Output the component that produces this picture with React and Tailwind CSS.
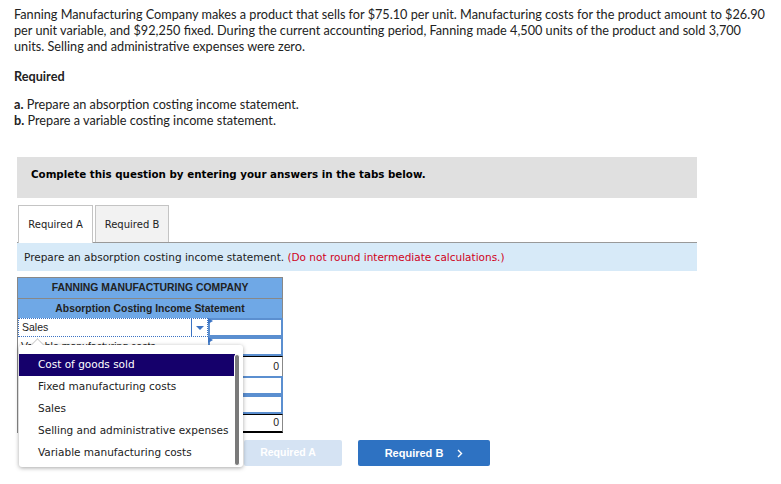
export default function App() {
  const options = [
    "Cost of goods sold",
    "Fixed manufacturing costs",
    "Sales",
    "Selling and administrative expenses",
    "Variable manufacturing costs",
  ];

  return (
    <div className="w-[781px] h-[484px] bg-white overflow-hidden relative">
      {/* problem text */}
      <div className="px-[14px] pt-[6px] text-[12.7px] leading-[16px] text-[#222] font-['Lato','Open_Sans',sans-serif] whitespace-nowrap">
        <p>
          Fanning Manufacturing Company makes a product that sells for $75.10 per unit. Manufacturing costs for the product amount to $26.90
          <br />
          per unit variable, and $92,250 fixed. During the current accounting period, Fanning made 4,500 units of the product and sold 3,700
          <br />
          units. Selling and administrative expenses were zero.
        </p>
        <p className="mt-[14px] font-bold">Required</p>
        <p className="mt-[12px]">
          <b>a.</b> Prepare an absorption costing income statement.
        </p>
        <p>
          <b>b.</b> Prepare a variable costing income statement.
        </p>
      </div>

      <div className="ml-[17px] w-[680px] mt-[29px] font-['DejaVu_Sans',Verdana,sans-serif]">
        <div className="h-[41px] bg-[#e0e0e0] flex items-center px-[14px] pb-[6px] text-[10.3px] font-bold text-black">
          Complete this question by entering your answers in the tabs below.
        </div>

        {/* tabs */}
        <div className="mt-[7px] flex items-end gap-[2px] pl-px border-b border-[#999]">
          <div className="h-[38px] w-[75px] flex items-center justify-center bg-white border border-[#c4c4c4] border-b-0 text-[10px] text-[#222] -mb-px">
            Required A
          </div>
          <div className="h-[37px] w-[74px] flex items-center justify-center bg-[#f2f2f2] border border-[#c4c4c4] border-b-0 text-[10px] text-[#222]">
            Required B
          </div>
        </div>

        <div className="h-[28px] bg-[#d7eaf8] flex items-center px-[7px] pt-px text-[10.5px] text-[#222] whitespace-nowrap">
          Prepare an absorption costing income statement.&nbsp;
          <span className="text-[#d0021b]">(Do not round intermediate calculations.)</span>
        </div>

        {/* table */}
        <div className="mt-[6px] w-[266px] border-l border-[#888] font-['Liberation_Sans',Arial,sans-serif]">
          <div className="h-[21px] bg-[#6fa8e6] border-t border-r border-[#888] flex items-center justify-center text-[10.4px] font-bold text-[#222]">
            FANNING MANUFACTURING COMPANY
          </div>
          <div className="h-[20px] bg-[#6fa8e6] border-t border-r border-[#888] flex items-center justify-center text-[10.4px] font-bold text-[#222]">
            Absorption Costing Income Statement
          </div>
          {/* Sales row */}
          <div className="flex h-[19px]">
            <div className="w-[190px] border border-dotted border-[#3b73c4] bg-white flex items-center">
              <span className="flex-1 pl-[3px] text-[10.5px] text-[#222]">Sales</span>
              <span className="w-[16px] h-full border-l border-[#3b73c4] flex items-center justify-center">
                <span className="w-0 h-0 border-l-[4px] border-r-[4px] border-t-[4px] border-l-transparent border-r-transparent border-t-[#3b73c4]" />
              </span>
            </div>
            <div className="flex-1 border-2 border-[#5b8fd0] bg-white relative">
              <span className="absolute -left-[2px] -top-[2px] w-0 h-0 border-t-[3px] border-b-[3px] border-l-[5px] border-t-transparent border-b-transparent border-l-[#3b73c4]" />
            </div>
          </div>
          {/* Variable manufacturing costs row */}
          <div className="flex h-[19px]">
            <div className="w-[190px] bg-white flex items-center overflow-hidden">
              <span className="pl-[3px] text-[10.5px] text-[#222]">Variable manufacturing costs</span>
            </div>
            <div className="flex-1 border-2 border-[#5b8fd0] bg-white relative">
              <span className="absolute -left-[2px] -top-[2px] w-0 h-0 border-t-[3px] border-b-[3px] border-l-[5px] border-t-transparent border-b-transparent border-l-[#3b73c4]" />
            </div>
          </div>
          {/* subtotal */}
          <div className="flex h-[20px]">
            <div className="w-[190px]" />
            <div className="flex-1 border-t border-black border-r border-r-[#888] flex items-center justify-end pr-[3px] text-[10.5px] text-[#222]">0</div>
          </div>
          <div className="flex h-[19px]">
            <div className="w-[190px]" />
            <div className="flex-1 border-2 border-[#5b8fd0] bg-white" />
          </div>
          <div className="flex h-[19px]">
            <div className="w-[190px]" />
            <div className="flex-1 border-2 border-[#5b8fd0] bg-white" />
          </div>
          <div className="flex h-[19px]">
            <div className="w-[190px]" />
            <div className="flex-1 border-t border-black border-b-2 border-b-black border-r border-r-[#888] flex items-center justify-end pr-[3px] text-[10.5px] text-[#222]">0</div>
          </div>
        </div>
      </div>

      {/* nav buttons */}
      <div className="absolute left-[244px] top-[440px] flex gap-[16px] font-['Liberation_Sans',Arial,sans-serif]">
        <div className="w-[98px] h-[26px] rounded-[2px] bg-[#d5e3f3] flex items-center justify-center pr-[10px] text-[10.5px] font-bold text-white">
          Required A
        </div>
        <div className="w-[132px] h-[26px] rounded-[2px] bg-[#2e72c2] flex items-center justify-center gap-[14px] text-[11px] font-bold text-white">
          Required B
          <svg width="6" height="9" viewBox="0 0 6 9" fill="none" stroke="white" strokeWidth="1.4">
            <path d="M1 1l3.5 3.5L1 8" />
          </svg>
        </div>
      </div>

      {/* open dropdown menu */}
      <div className="absolute left-[19px] top-[345px] w-[224px] h-[122px] bg-white rounded-[3px] shadow-[0_1px_4px_rgba(0,0,0,0.35)] font-['DejaVu_Sans',Verdana,sans-serif]">
        <span className="absolute left-[14px] -top-[5px] w-[9px] h-[9px] bg-white rotate-45 border-l border-t border-[#ccc]" />
        <div className="relative pt-[9px]">
          {options.map((o, i) => (
            <div
              key={o}
              className={
                i === 0
                  ? "h-[22px] w-[216px] bg-[#15006b] text-white flex items-center pl-[19px] text-[10.5px] whitespace-nowrap"
                  : "h-[22px] w-[216px] text-[#222] flex items-center pl-[19px] text-[10.5px] whitespace-nowrap"
              }
            >
              {o}
            </div>
          ))}
        </div>
        <div className="absolute right-[3px] top-[9px] bottom-[1px] w-[6px] rounded-[3px] bg-[#7a7a7a] border border-white" />
      </div>
    </div>
  );
}
